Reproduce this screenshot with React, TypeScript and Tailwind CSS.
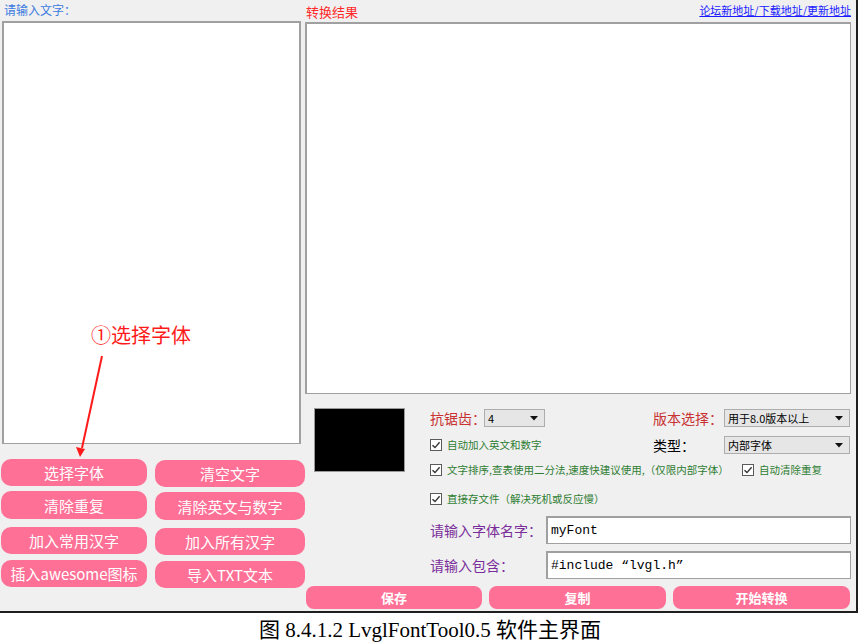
import React from "react";

const cjk = { fontFamily: '"Noto Sans CJK SC", "Noto Sans", sans-serif' };

function PinkBtn({ label, className = "" }: { label: string; className?: string }) {
  return (
    <div
      className={`flex items-center justify-center rounded-[10px] bg-[#fe7096] text-white text-[15px] leading-none ${className}`}
      style={cjk}
    >
      {label}
    </div>
  );
}

function Combo({ value, className = "" }: { value: string; className?: string }) {
  return (
    <div
      className={`flex shrink-0 items-center justify-between border border-[#adadad] bg-[#e6e6e6] pl-[3px] pr-[6px] text-[11px] text-black leading-none ${className}`}
      style={cjk}
    >
      <span>{value}</span>
      <svg width="8" height="5" viewBox="0 0 8 5">
        <path d="M0 0 L8 0 L4 4.5 Z" fill="#111" />
      </svg>
    </div>
  );
}

function Check({ label }: { label: string }) {
  return (
    <div className="flex items-center gap-[5px]">
      <div className="flex h-[12px] w-[12px] items-center justify-center border border-[#5a5a5a] bg-white">
        <svg width="10" height="10" viewBox="0 0 10 10">
          <path d="M1.5 5.2 L4 7.6 L8.6 2.2" stroke="#333" strokeWidth="1.4" fill="none" />
        </svg>
      </div>
      <span className="text-[10.5px] leading-none text-[#2e7d32] whitespace-nowrap" style={cjk}>
        {label}
      </span>
    </div>
  );
}

export default function App() {
  return (
    <div className="relative h-[643px] w-[860px] bg-white overflow-hidden">
      <div className="flex h-[613px] w-[858px] border-b-2 border-r-2 border-[#1e1e1e] bg-[#f0f0f0]">
        {/* Left column */}
        <div className="flex w-[305px] flex-col">
          <div className="h-[21px] pl-[4px] pt-[3px] text-[12px] leading-[14px] text-[#3c7be0]" style={cjk}>
            请输入文字：
          </div>
          <div className="ml-[2px] h-[423px] w-[299px] border border-[#a0a0a0] border-l-2 border-t-2 border-r-2 bg-white" />
          <div className="mt-[15px] flex flex-col">
            <div className="flex">
              <PinkBtn label="选择字体" className="ml-[1px] h-[27px] w-[146px]" />
              <PinkBtn label="清空文字" className="ml-[8px] mt-[1px] h-[27px] w-[150px]" />
            </div>
            <div className="mt-[4px] flex">
              <PinkBtn label="清除重复" className="ml-[1px] h-[28px] w-[146px]" />
              <PinkBtn label="清除英文与数字" className="ml-[8px] mt-[1px] h-[28px] w-[150px]" />
            </div>
            <div className="mt-[7px] flex">
              <PinkBtn label="加入常用汉字" className="ml-[1px] h-[27px] w-[146px]" />
              <PinkBtn label="加入所有汉字" className="ml-[8px] mt-[1px] h-[27px] w-[150px]" />
            </div>
            <div className="mt-[5px] flex">
              <PinkBtn label="插入awesome图标" className="ml-[1px] h-[27px] w-[146px]" />
              <PinkBtn label="导入TXT文本" className="ml-[8px] mt-[1px] h-[27px] w-[150px]" />
            </div>
          </div>
        </div>

        {/* Right column */}
        <div className="flex w-[551px] flex-col">
          <div className="flex h-[22px] items-start justify-between pr-[5px]">
            <span className="pl-[1px] pt-[5px] text-[13px] leading-[14px] text-[#ff2a2a]" style={cjk}>
              转换结果
            </span>
            <span className="pt-[4px] text-[11px] leading-[13px] text-[#1a1aff] underline" style={cjk}>
              论坛新地址/下载地址/更新地址
            </span>
          </div>
          <div className="h-[372px] w-[546px] border border-[#a0a0a0] border-l-2 border-t-2 bg-white" />

          <div className="flex h-[192px]">
            <div className="w-[125px] pl-[9px] pt-[14px]">
              <div className="h-[64px] w-[91px] border border-[#9a9a9a] bg-black" />
            </div>
            <div className="flex w-[421px] flex-col pt-[15px]">
              <div className="flex h-[18px] items-center">
                <span className="w-[54px] shrink-0 whitespace-nowrap text-[14px] leading-none text-[#c83232]" style={cjk}>抗锯齿：</span>
                <Combo value="4" className="h-[18px] w-[61px]" />
                <span className="ml-[108px] w-[71px] shrink-0 whitespace-nowrap text-[14px] leading-none text-[#c83232]" style={cjk}>版本选择：</span>
                <Combo value="用于8.0版本以上" className="h-[18px] w-[126px]" />
              </div>
              <div className="mt-[9px] flex h-[18px] items-center">
                <div className="w-[223px] shrink-0">
                  <Check label="自动加入英文和数字" />
                </div>
                <span className="w-[71px] shrink-0 whitespace-nowrap text-[14px] leading-none text-black" style={cjk}>类型：</span>
                <Combo value="内部字体" className="h-[18px] w-[126px]" />
              </div>
              <div className="mt-[8px] flex h-[16px] items-center">
                <div className="w-[312px] shrink-0">
                  <Check label="文字排序,查表使用二分法,速度快建议使用,（仅限内部字体）" />
                </div>
                <Check label="自动清除重复" />
              </div>
              <div className="mt-[13px] flex h-[16px] items-center">
                <Check label="直接存文件（解决死机或反应慢）" />
              </div>
              <div className="mt-[9px] flex h-[28px] items-center">
                <span className="w-[116px] shrink-0 whitespace-nowrap text-[14px] leading-none text-[#7a2e9a]" style={cjk}>请输入字体名字：</span>
                <div
                  className="flex h-[28px] w-[305px] items-center border border-[#a0a0a0] border-l-2 border-t-2 bg-white pl-[3px] text-[13px] text-black"
                  style={{ fontFamily: '"Liberation Mono", monospace' }}
                >
                  myFont
                </div>
              </div>
              <div className="mt-[7px] flex h-[28px] items-center">
                <span className="w-[116px] shrink-0 whitespace-nowrap text-[14px] leading-none text-[#7a2e9a]" style={cjk}>请输入包含：</span>
                <div
                  className="flex h-[28px] w-[305px] items-center border border-[#a0a0a0] border-l-2 border-t-2 bg-white pl-[3px] text-[13px] text-black"
                  style={{ fontFamily: '"Liberation Mono", monospace' }}
                >
                  #include “lvgl.h”
                </div>
              </div>
            </div>
          </div>

          <div className="flex h-[23px] gap-[7px] pl-[1px]">
            <div className="flex h-[23px] w-[176px] items-center justify-center rounded-[8px] bg-[#fe7096] text-[13px] font-bold text-white" style={cjk}>保存</div>
            <div className="flex h-[23px] w-[177px] items-center justify-center rounded-[8px] bg-[#fe7096] text-[13px] font-bold text-white" style={cjk}>复制</div>
            <div className="flex h-[23px] w-[177px] items-center justify-center rounded-[8px] bg-[#fe7096] text-[13px] font-bold text-white" style={cjk}>开始转换</div>
          </div>
        </div>
      </div>

      <div
        className="mt-[6px] flex justify-center text-[21px] leading-[22px] text-black"
        style={{ fontFamily: '"Liberation Serif", "Noto Sans CJK SC", serif' }}
      >
        图 8.4.1.2 LvglFontTool0.5 软件主界面
      </div>

      {/* annotation */}
      <div
        className="absolute left-[91px] top-[325px] text-[20px] leading-none text-[#ff1a1a]"
        style={cjk}
      >
        ①选择字体
      </div>
      <svg className="absolute left-0 top-0" width="200" height="470" viewBox="0 0 200 470">
        <line x1="102" y1="356" x2="82" y2="448" stroke="#ff1a1a" strokeWidth="2" />
        <path d="M76 447 L85 449 L80 457 Z" fill="#ff1a1a" />
      </svg>
    </div>
  );
}
